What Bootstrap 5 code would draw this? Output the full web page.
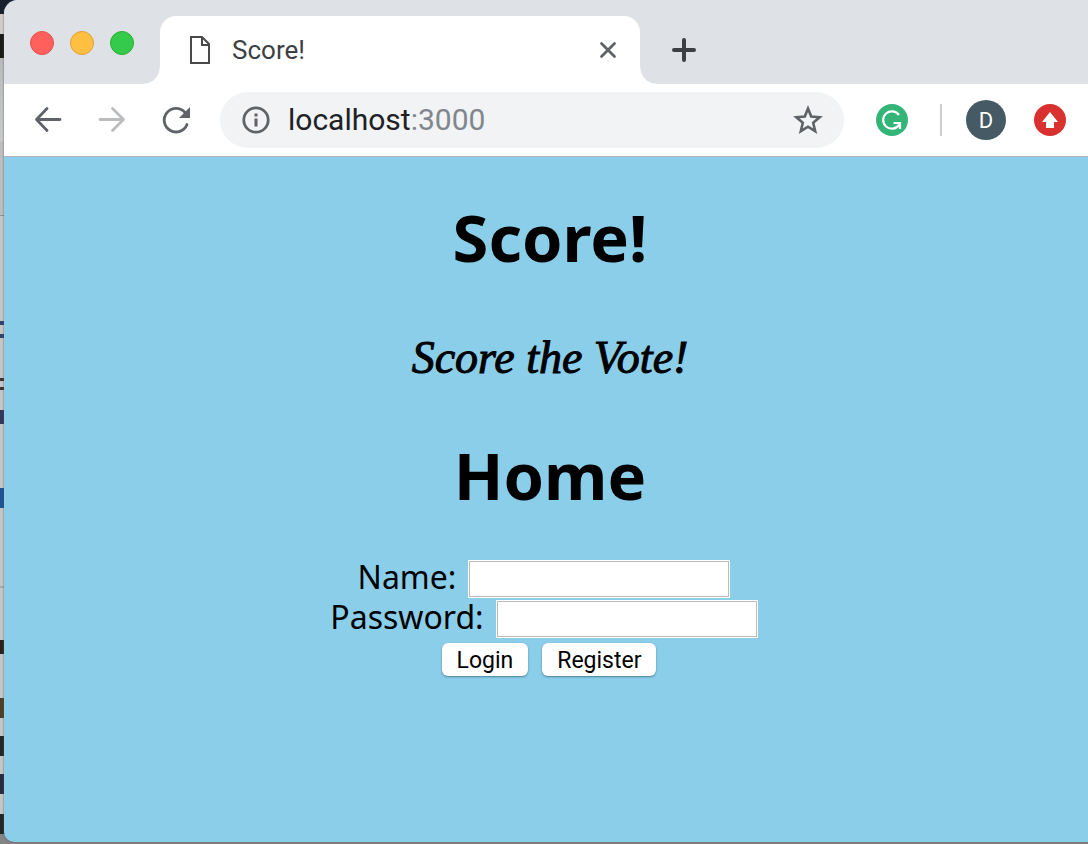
<!DOCTYPE html>
<html lang="en">
<head>
<meta charset="utf-8">
<meta name="viewport" content="width=device-width, initial-scale=1">
<title>Score!</title>
<link href="https://cdn.jsdelivr.net/npm/bootstrap@5.3.0/dist/css/bootstrap.min.css" rel="stylesheet">
<style>
  /* the desktop that shows past the window's left and bottom edges */
  .desktop {
    font-family: Roboto, "Liberation Sans", sans-serif;
    padding: 0 0 2px 4px;
    background: linear-gradient(#191e2c 14px, #d2cdcd 14px 34px, #1b1a14 34px 58px, #b9babc 58px, #c9cacc 141px, #bebebe 142px 215px, #929292 215px 216px,
      #c6c6c6 216px 321px, #35406b 321px 325px, #c6c6c6 325px 334px, #35406b 334px 338px, #c6c6c6 338px 378px, #40342f 378px 381px, #c6c6c6 381px 387px, #40342f 387px 390px, #c6c6c6 390px 410px,
      #33375a 410px 424px, #c6c6c6 424px 488px, #1c5496 488px 508px, #c6c6c6 508px 586px, #a9a9a9 586px 588px, #c6c6c6 588px 640px,
      #2a211a 640px 654px, #c6c6c6 654px 698px, #4c4028 698px 718px, #c6c6c6 718px 736px, #252525 736px 756px, #c6c6c6 756px 774px, #2a2b3c 774px 794px,
      #c6c6c6 794px 814px, #252525 814px 834px, #858585 834px);
  }
  .browser { border-radius: 14px 0 0 10px; overflow: hidden; box-shadow: 0 0 2px #555; background: #8bcee9; }
  .tabstrip { background: #dee1e6; height: 84px; }
  .lights { width: 156px; padding: 31px 0 0 26px; gap: 16px; }
  .light { width: 24px; height: 24px; border-radius: 50%; border: 1px solid; }
  .light-close { background: #ff605c; border-color: #e0504d; }
  .light-min { background: #ffbf40; border-color: #dfa035; }
  .light-max { background: #34cb4a; border-color: #2bac35; }
  .tab { flex: 0 1 480px; position: relative; margin-top: 16px; padding: 0 22px 0 28px; background: #fff; border-radius: 16px 16px 0 0; color: #3c4043; font-size: 26px; }
  .tab::before, .tab::after { content: ""; position: absolute; bottom: 0; width: 16px; height: 16px; }
  .tab::before { right: 100%; background: radial-gradient(circle at 0 0, transparent 15px, #fff 16px); }
  .tab::after { left: 100%; background: radial-gradient(circle at 100% 0, transparent 15px, #fff 16px); }
  .tool { border: 0; padding: 0; background: none; display: flex; }
  .new-tab { margin: 16px 0 0 28px; }
  .toolbar { background: #fff; height: 72px; padding: 0 22px 0 28px; }
  .nav-tools { gap: 32px; margin-right: 28px; }
  .address { background: #f1f3f4; height: 56px; border-radius: 28px; padding: 0 20px; gap: 16px; }
  .url { font-size: 30px; line-height: 40px; color: #202124; }
  .port { color: #80868b; }
  .rule { width: 2px; height: 32px; background: #cecece; margin: 0 24px 0 32px; }
  .avatar { width: 40px; height: 40px; background: #455a64; color: #fff; font-size: 22px; margin-right: 28px; }
  .site { font-family: "Lucida Grande", "Noto Sans", sans-serif; color: #000; padding: 37px 0 0 8px; border-top: 1px solid #b3b6b9; }
  .site h1 { font-size: 65px; line-height: 86px; font-weight: 700; margin: 0; }
  .tagline { font-family: "Apple Chancery", "Liberation Serif", serif; font-style: italic; font-size: 46px; line-height: 64px; margin: 46px 0 42px; -webkit-text-stroke: 1px #000; }
  .field-row { height: 40px; gap: 12px; font-size: 32px; line-height: 36px; margin-right: 12px; }
  .field-row label { padding-bottom: 4px; }
  .field-row input { width: 262px; height: 38px; border: 1px solid #fff; outline: 1px solid #bbb; outline-offset: -2px; background: #fff; border-radius: 0; padding: 4px; font-size: 22px; }
  .form-area { padding-top: 41px; }
  .mac-btn { font-family: Roboto, sans-serif; font-size: 23px; line-height: 35px; height: 33px; padding: 0 15px; border: 0; border-radius: 6px; background: #fff; color: #000; box-shadow: 0 1px 2px #4a7f98; }
  .actions { gap: 14px; padding: 4px 2px 0 0; }
</style>
</head>
<body class="desktop min-vh-100 d-flex flex-column">
<div class="browser flex-grow-1 d-flex flex-column">
  <div class="tabstrip d-flex">
    <div class="lights d-flex flex-shrink-0">
      <button class="light light-close p-0" aria-label="Close"></button>
      <button class="light light-min p-0" aria-label="Minimize"></button>
      <button class="light light-max p-0" aria-label="Zoom"></button>
    </div>
    <div class="tab d-flex align-items-center">
      <svg width="24" height="32" viewBox="0 0 24 32" fill="none" stroke="#4a4a4a" stroke-width="2" aria-hidden="true"><path d="M3 3h11l7 7v19H3zM14 3v8h7"/></svg>
      <span class="ms-3 ps-1 flex-grow-1">Score!</span>
      <button class="tool" aria-label="Close tab"><svg width="20" height="20" viewBox="0 0 20 20" stroke="#5f6368" stroke-width="2.8" stroke-linecap="round"><path d="M3.500 3.500l13 13M16.500 3.500l-13 13"/></svg></button>
    </div>
    <button class="tool new-tab align-items-center" aria-label="New tab"><svg width="32" height="32" viewBox="0 0 32 32" stroke="#3c4043" stroke-width="4" stroke-linecap="round"><path d="M6 16h20M16 6v20"/></svg></button>
  </div>
  <div class="toolbar d-flex align-items-center">
    <div class="nav-tools d-flex">
      <button class="tool" aria-label="Back"><svg width="32" height="32" viewBox="0 0 32 32" fill="none" stroke="#5f6368" stroke-width="2.8" stroke-linecap="round" stroke-linejoin="round"><path d="M32 15.500H8.500M19 4.500L8.500 15.500l10.500 11" transform="translate(-4)"/></svg></button>
      <button class="tool" aria-label="Forward"><svg width="32" height="32" viewBox="0 0 32 32" fill="none" stroke="#babcbe" stroke-width="2.8" stroke-linecap="round" stroke-linejoin="round"><path d="M4 15.500h23M16.500 4.500l11 11-11 11"/></svg></button>
      <button class="tool" aria-label="Reload"><svg width="32" height="32" viewBox="0 0 32 32" fill="none" stroke="#5f6368" stroke-width="2.8" stroke-linecap="round"><path d="M27 20.500A11.800 11.800 0 1 1 25 8.500"/><path d="M30 3v11H19z" fill="#5f6368" stroke="none"/></svg></button>
    </div>
    <div class="address d-flex flex-grow-1 align-items-center">
      <svg width="32" height="32" viewBox="0 0 32 32" fill="none" stroke="#5f6368" stroke-width="2.8" aria-hidden="true"><circle cx="16" cy="16" r="12.200"/><path d="M16 14.500v8M16 9.500v3" stroke-width="3"/></svg>
      <a href="#" class="url flex-grow-1 text-decoration-none">localhost<span class="port">:3000</span></a>
      <button class="tool" aria-label="Bookmark"><svg width="32" height="32" viewBox="0 0 32 32" fill="none" stroke="#5f6368" stroke-width="2.6"><path d="M16 4.500l3.200 8 8.500.7-6.500 5.600 2 8.400-7.200-4.500-7.200 4.500 2-8.400-6.500-5.600 8.500-.7z"/></svg></button>
    </div>
    <button class="tool ms-4 ps-2" aria-label="Grammarly"><svg width="32" height="32" viewBox="0 0 32 32" fill="none" stroke="#fff" stroke-width="2.200"><circle cx="16" cy="16" r="16" fill="#34b578" stroke="none"/><path d="M23 11A8.700 8.700 0 1 0 23 21l1-2"/><path d="M17.500 19H24v6"/></svg></button>
    <div class="rule"></div>
    <button class="avatar rounded-circle border-0 p-0" aria-label="Profile">D</button>
    <button class="tool" aria-label="Update available"><svg width="32" height="32" viewBox="0 0 32 32"><circle cx="16" cy="16" r="16" fill="#d93030"/><path d="M16 8l8 10h-4v6h-8v-6H8z" fill="#fff"/></svg></button>
  </div>
  <main class="site flex-grow-1 text-center">
    <h1>Score!</h1>
    <p class="tagline">Score the Vote!</p>
    <h1>Home</h1>
    <form class="form-area">
      <div class="field-row d-flex justify-content-center align-items-center"><label for="name">Name:</label><input id="name" type="text"></div>
      <div class="field-row d-flex justify-content-center align-items-center"><label for="password">Password:</label><input id="password" type="password"></div>
      <div class="actions d-flex justify-content-center"><button type="button" class="mac-btn">Login</button><button type="button" class="mac-btn">Register</button></div>
    </form>
  </main>
</div>
<script src="https://cdn.jsdelivr.net/npm/bootstrap@5.3.0/dist/js/bootstrap.bundle.min.js"></script>
</body>
</html>
